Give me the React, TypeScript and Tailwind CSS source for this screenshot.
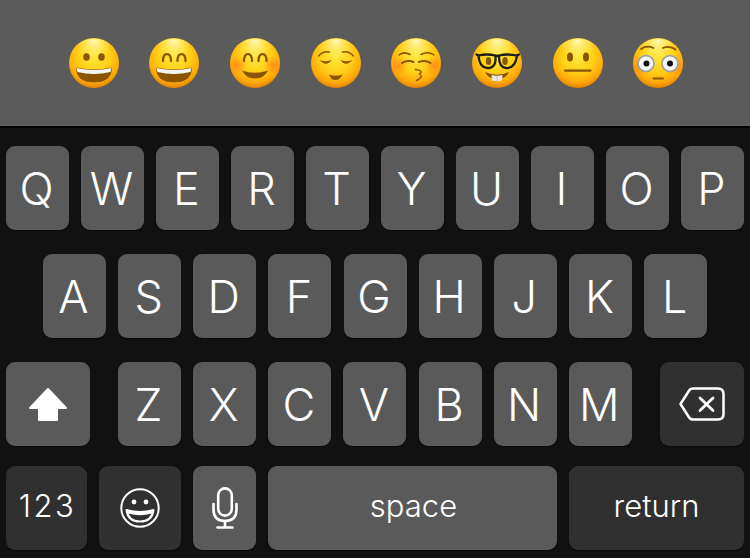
import type { ReactNode } from "react"

const font = { fontFamily: "Inter, 'Liberation Sans', sans-serif" }

const brown = "#8a5400"

function Face({ id, blush, children }: { id: string; blush?: boolean; children?: ReactNode }) {
  return (
    <svg viewBox="0 0 100 100" className="h-[50px] w-[50px] shrink-0">
      <defs>
        <radialGradient id={`${id}-base`} cx="50%" cy="36%" r="66%">
          <stop offset="0%" stopColor="#ffe83f" />
          <stop offset="50%" stopColor="#ffcf16" />
          <stop offset="80%" stopColor="#ffa90a" />
          <stop offset="100%" stopColor="#dd7a00" />
        </radialGradient>
        <radialGradient id={`${id}-top`} cx="50%" cy="5%" r="38%">
          <stop offset="0%" stopColor="#fffbc0" stopOpacity="0.95" />
          <stop offset="100%" stopColor="#fff36b" stopOpacity="0" />
        </radialGradient>
        <radialGradient id={`${id}-blush`}>
          <stop offset="0%" stopColor="#ff8010" stopOpacity="0.75" />
          <stop offset="100%" stopColor="#ff8a1a" stopOpacity="0" />
        </radialGradient>
      </defs>
      <circle cx="50" cy="50" r="50" fill={`url(#${id}-base)`} />
      <circle cx="50" cy="50" r="49" fill={`url(#${id}-top)`} />
      {blush && (
        <>
          <circle cx="14" cy="55" r="20" fill={`url(#${id}-blush)`} />
          <circle cx="86" cy="55" r="20" fill={`url(#${id}-blush)`} />
        </>
      )}
      {children}
    </svg>
  )
}

function OpenMouth() {
  return (
    <>
      <path d="M15 60Q50 68 85 60Q85 88 50 88Q15 88 15 60Z" fill={brown} stroke={brown} strokeWidth="2" strokeLinejoin="round" />
      <path d="M15 60Q50 68 85 60L83 68Q50 76 17 68Z" fill="#f4f4f4" />
    </>
  )
}

function ArchEyes() {
  return (
    <g fill="none" stroke={brown} strokeWidth="4.5" strokeLinecap="round">
      <path d="M28 46Q28 32 36 32Q44 32 44 46" />
      <path d="M57 46Q57 32 65 32Q73 32 73 46" />
    </g>
  )
}

function Emojis() {
  return (
    <div className="flex h-[126px] items-center justify-center gap-[30.7px] bg-[#5b5b5b] pl-[2px]">
      <Face id="grin">
        <ellipse cx="35" cy="38" rx="6.5" ry="7.5" fill={brown} />
        <ellipse cx="65" cy="38" rx="6.5" ry="7.5" fill={brown} />
        <OpenMouth />
      </Face>
      <Face id="beam">
        <ArchEyes />
        <OpenMouth />
      </Face>
      <Face id="smile" blush>
        <ArchEyes />
        <path d="M24 65Q50 74 76 65Q68 81 50 81Q32 81 24 65Z" fill={brown} />
      </Face>
      <Face id="relieved">
        <g fill="none" stroke={brown} strokeLinecap="round">
          <path d="M15 36Q24 26 37 28" strokeWidth="3" />
          <path d="M63 28Q76 26 85 36" strokeWidth="3" />
        </g>
        <path d="M17 44Q28 49 41 44Q31 59 17 44Z" fill={brown} />
        <path d="M59 44Q72 49 83 44Q69 59 59 44Z" fill={brown} />
        <path d="M36 73Q49 78 63 73Q58 84 49 84Q40 84 36 73Z" fill={brown} />
      </Face>
      <Face id="kiss" blush>
        <g fill="none" stroke={brown} strokeLinecap="round">
          <path d="M16 34Q26 26 38 33" strokeWidth="3" />
          <path d="M60 33Q74 26 86 34" strokeWidth="3" />
          <path d="M22 50Q33 43 45 48" strokeWidth="4" />
          <path d="M56 48Q68 43 79 50" strokeWidth="4" />
          <path d="M49 63Q66 65 57 72Q66 78 51 85" strokeWidth="3" strokeLinejoin="round" />
        </g>
      </Face>
      <Face id="nerd">
        <ellipse cx="33" cy="46" rx="5.5" ry="8" fill={brown} />
        <ellipse cx="66" cy="46" rx="5.5" ry="8" fill={brown} />
        <g fill="none" stroke="#1d1d1d" strokeWidth="4.5" strokeLinejoin="round" strokeLinecap="round">
          <path d="M13 35Q30 31 47 35Q49 60 32 60Q15 60 13 35Z" />
          <path d="M54 35Q71 31 90 35Q87 60 70 60Q53 60 54 35Z" />
          <path d="M47 37Q50 34 54 37M9 33L13 35M90 35L94 33" />
        </g>
        <path d="M26 68Q50 79 74 68Q68 82 50 82Q32 82 26 68Z" fill={brown} />
        <path d="M39 74Q50 77 61 74L60 84Q60 86 55 86H45Q40 86 40 84Z" fill="#e8e8e8" />
        <path d="M50 76V86" stroke="#a0a0a0" strokeWidth="1" />
      </Face>
      <Face id="neutral">
        <ellipse cx="34" cy="38" rx="6" ry="9" fill={brown} />
        <ellipse cx="66" cy="38" rx="6" ry="9" fill={brown} />
        <path d="M24 65H75" stroke={brown} strokeWidth="4.5" strokeLinecap="round" />
      </Face>
      <Face id="flushed" blush>
        <g fill="none" stroke={brown} strokeWidth="3.5" strokeLinecap="round">
          <path d="M16 22Q28 14 41 20" />
          <path d="M60 20Q73 14 85 23" />
        </g>
        <circle cx="26" cy="51" r="16" fill="#f5f5f5" stroke="#a0a0a0" strokeWidth="3.5" />
        <circle cx="74" cy="51" r="16" fill="#f5f5f5" stroke="#a0a0a0" strokeWidth="3.5" />
        <circle cx="27" cy="51" r="6" fill="#111" />
        <circle cx="74" cy="51" r="6" fill="#111" />
        <path d="M41 81H60" stroke={brown} strokeWidth="4" strokeLinecap="round" />
      </Face>
    </div>
  )
}

function Key({ children, dark, className = "w-[63px]" }: { children: ReactNode; dark?: boolean; className?: string }) {
  return (
    <div
      className={`flex h-[84px] shrink-0 items-center justify-center rounded-[9px] text-white shadow-[0_1px_1px_rgba(0,0,0,0.5)] ${
        dark ? "bg-[#303030]" : "bg-[#5a5a5a]"
      } ${className}`}
    >
      {children}
    </div>
  )
}

function Letter({ value }: { value: string }) {
  return (
    <Key>
      <span className="pr-[2px] text-[45px] leading-none font-light">{value}</span>
    </Key>
  )
}

function ShiftIcon() {
  return (
    <svg width="40" height="35" viewBox="0 0 40 35" fill="white" stroke="white" strokeWidth="2" strokeLinejoin="round">
      <path d="M20 2L38 21H29V33H11V21H2Z" />
    </svg>
  )
}

function DeleteIcon() {
  return (
    <svg width="46" height="34" viewBox="0 0 46 34" fill="none" stroke="white" strokeWidth="2.5" strokeLinecap="round" strokeLinejoin="round">
      <path d="M14 1.5H39Q44.5 1.5 44.5 7V27Q44.5 32.5 39 32.5H14Q12 32.5 10.5 31L1.5 17L10.5 3Q12 1.5 14 1.5Z" />
      <path d="M21 11L34 23.5M34 11L21 23.5" strokeWidth="2.8" />
    </svg>
  )
}

function SmileIcon() {
  return (
    <svg width="40" height="40" viewBox="0 0 40 40" fill="none" stroke="white" strokeWidth="2">
      <circle cx="20" cy="20" r="18.7" />
      <circle cx="14" cy="14" r="2.4" fill="white" stroke="none" />
      <circle cx="26" cy="14" r="2.4" fill="white" stroke="none" />
      <path d="M6.5 22Q20 26 33.5 22Q32 33.5 20 33.5Q8 33.5 6.5 22Z" strokeLinejoin="round" />
      <path d="M7 22Q20 26 33 22L32 25.5Q20 29 8 25.5Z" fill="white" stroke="none" />
    </svg>
  )
}

function MicIcon() {
  return (
    <svg width="26" height="42" viewBox="0 0 26 42" fill="none" stroke="white" strokeWidth="2.6" strokeLinecap="round">
      <rect x="6.2" y="1.4" width="13.6" height="27.2" rx="6.8" />
      <path d="M1.5 17V22.5Q1.5 34 13 34Q24.5 34 24.5 22.5V17" />
      <path d="M13 34V40M5.5 40.5H20.5" />
    </svg>
  )
}

const rowOne = ["Q", "W", "E", "R", "T", "Y", "U", "I", "O", "P"]
const rowTwo = ["A", "S", "D", "F", "G", "H", "J", "K", "L"]
const rowThree = ["Z", "X", "C", "V", "B", "N", "M"]

export default function App() {
  return (
    <div className="h-[558px] w-[750px] overflow-hidden bg-[#111111]" style={font}>
      <Emojis />
      <div className="h-[2px] bg-black" />
      <div className="flex flex-col px-[6px] pt-[18px]">
        <div className="flex gap-3">
          {rowOne.map((k) => (
            <Letter key={k} value={k} />
          ))}
        </div>
        <div className="mt-6 ml-[37px] flex gap-[12.15px]">
          {rowTwo.map((k) => (
            <Letter key={k} value={k} />
          ))}
        </div>
        <div className="mt-6 flex">
          <Key className="w-[84px]">
            <ShiftIcon />
          </Key>
          <div className="mr-auto ml-[28px] flex gap-[12.15px]">
            {rowThree.map((k) => (
              <Letter key={k} value={k} />
            ))}
          </div>
          <Key dark className="w-[84px]">
            <DeleteIcon />
          </Key>
        </div>
        <div className="mt-5 flex gap-3">
          <Key dark className="w-[81px]">
            <span className="pb-1 pl-[2px] text-[31px] font-light tracking-[2.5px]">123</span>
          </Key>
          <Key dark className="w-[82px]">
            <SmileIcon />
          </Key>
          <Key>
            <MicIcon />
          </Key>
          <Key className="flex-1">
            <span className="pb-1 pl-[2px] text-[31px] font-light">space</span>
          </Key>
          <Key dark className="w-[175px]">
            <span className="pb-1 text-[31px] font-light">return</span>
          </Key>
        </div>
      </div>
    </div>
  )
}
